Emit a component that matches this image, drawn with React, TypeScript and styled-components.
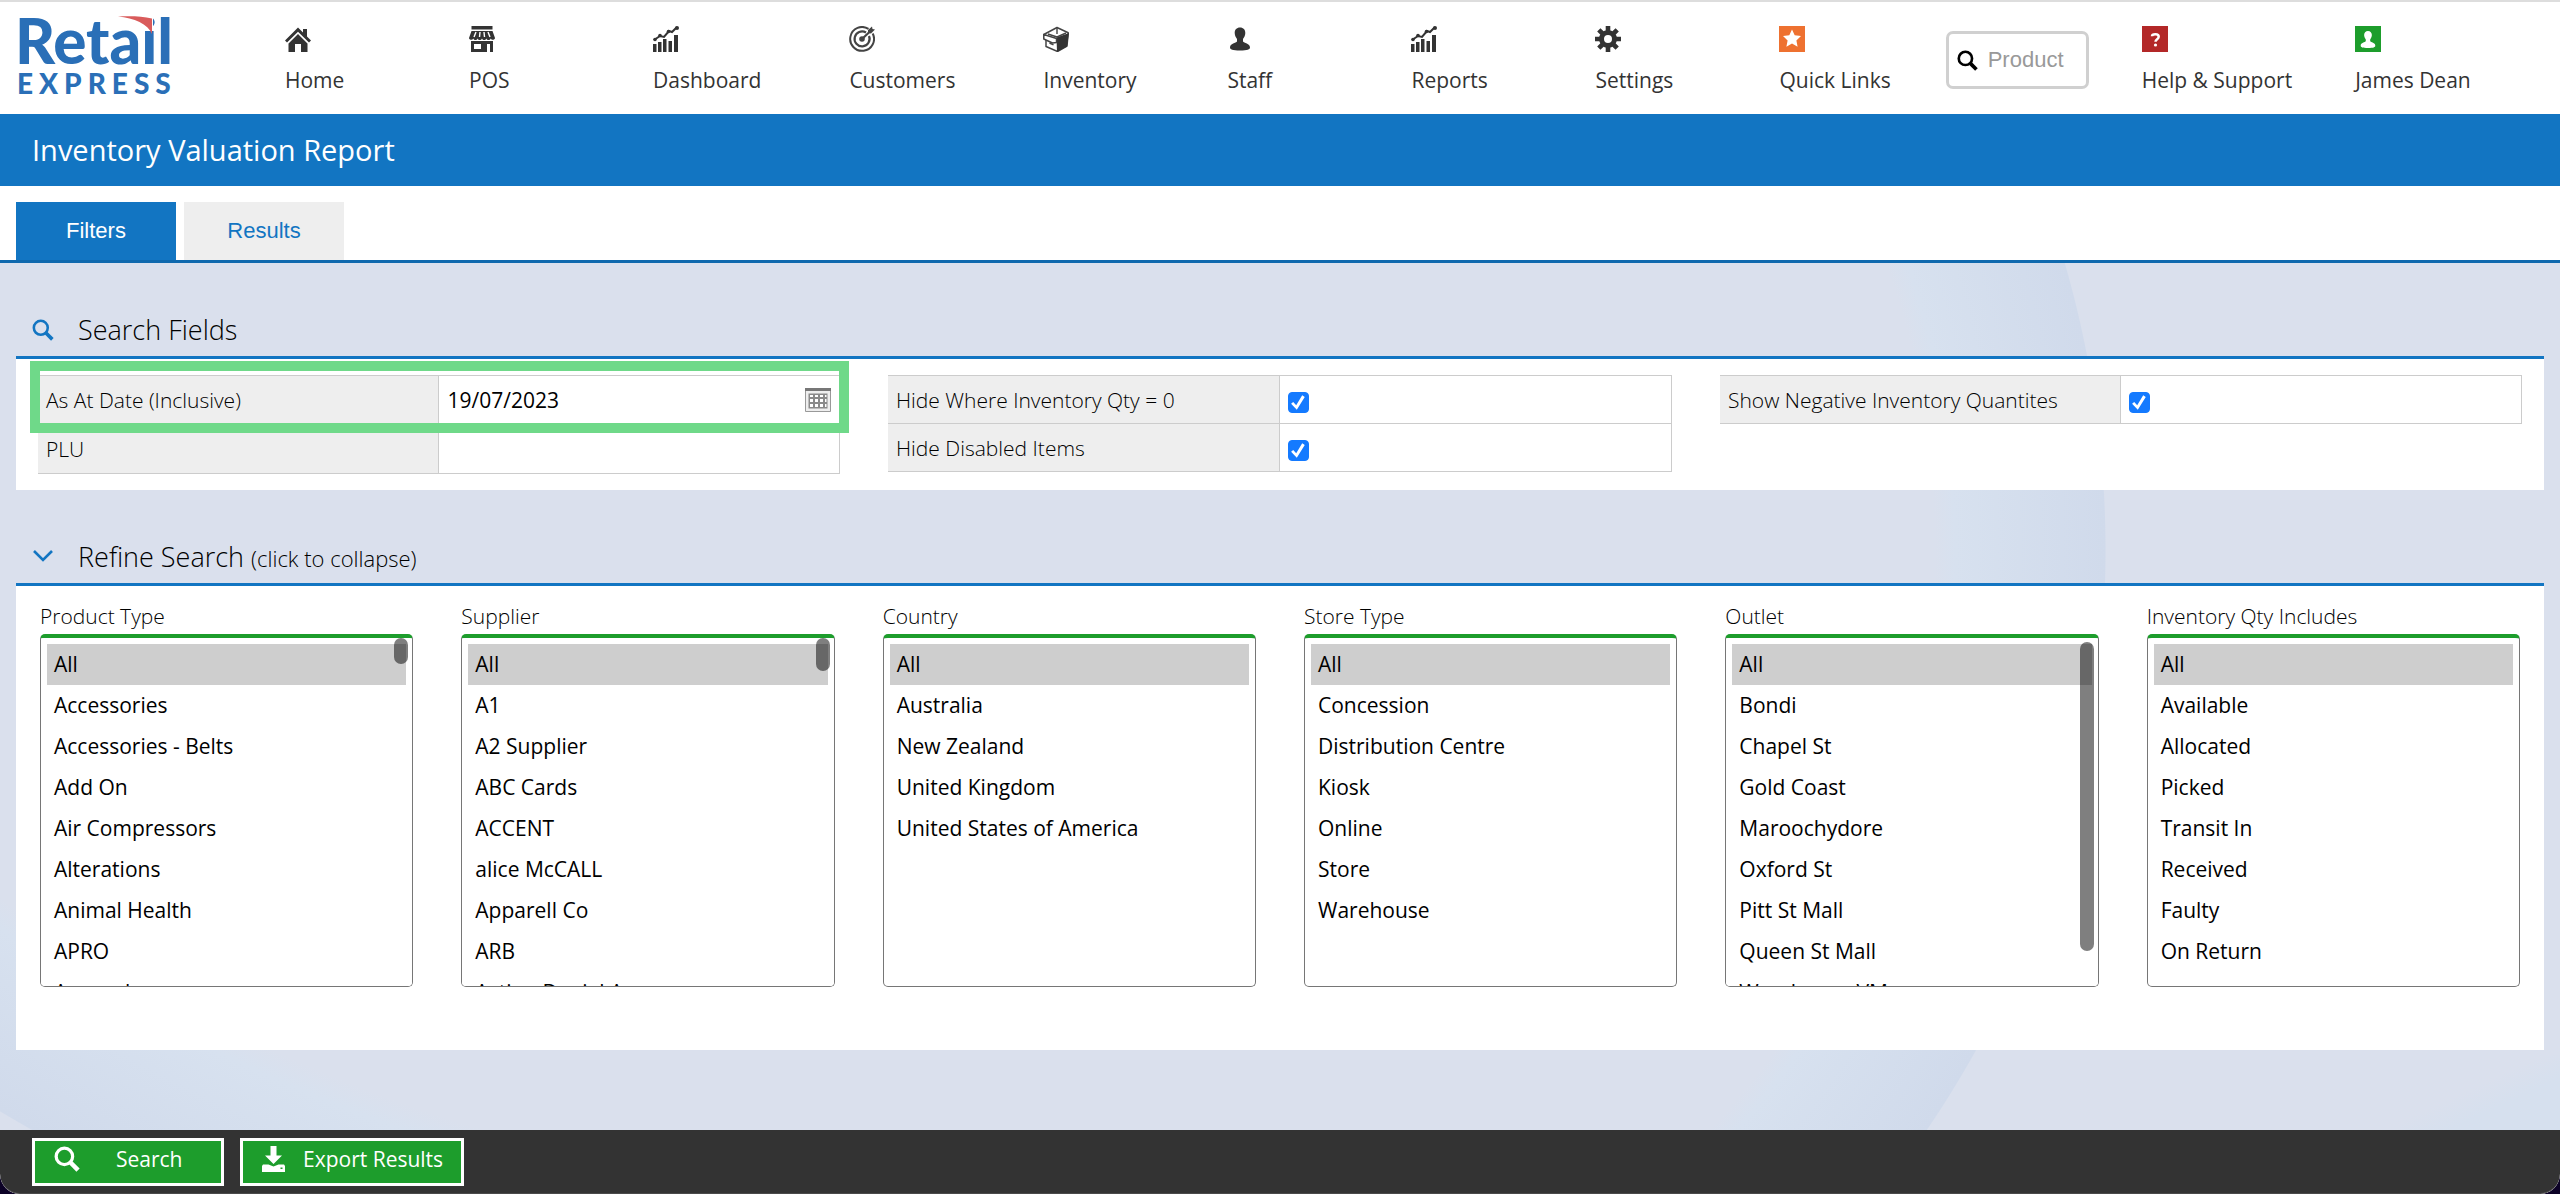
import React, { useState } from "react";
import styled, { createGlobalStyle } from "styled-components";

const BLUE = "#1275c2";
const GREEN = "#1d9d2c";
const LINE = "#cccccc";

const GlobalStyle = createGlobalStyle`
  *, *::before, *::after { box-sizing: border-box; }
  body {
    margin: 0;
    background: #0c0226;
    color: #000;
    font-family: "Open Sans", "Noto Sans", sans-serif;
    font-size: 21px;
    line-height: 28px;
  }
  button, input, select { font: inherit; color: inherit; }
`;

const Page = styled.div`
  min-height: 100vh;
  display: flex;
  flex-direction: column;
  overflow: hidden;
  background: #fff;
  border-radius: 0 0 20px 20px;
`;

const Header = styled.header`
  display: flex;
  align-items: flex-start;
  border-top: 2px solid #dddddd;
  padding: 0 14px;
`;

const LogoLink = styled.a`
  flex: none;
  display: block;
  width: 164px;
  margin-right: 107px;
`;

const LogoSvg = styled.svg`
  display: block;
`;

const Nav = styled.nav`
  flex: none;
  display: flex;
  gap: 88px;
  padding: 24px 0 20px;
`;

const NavLink = styled.a`
  display: flex;
  flex-direction: column;
  align-items: flex-start;
  gap: 14px;
  min-width: 96px;
  color: #333;
  white-space: nowrap;
  text-decoration: none;
`;

const NavIcon = styled.svg`
  display: block;
  width: 26px;
  height: 26px;
`;

const HeaderTools = styled.div`
  display: flex;
  flex: none;
  align-items: flex-start;
  gap: 53px;
  margin-left: 55px;
`;

const QuickSearch = styled.label`
  display: flex;
  align-items: center;
  gap: 10px;
  width: 143px;
  height: 58px;
  margin-top: 29px;
  padding: 0 8px;
  border: 3px solid #d0d0d0;
  border-radius: 7px;
  background: #fff;
`;

const QuickInput = styled.input`
  min-width: 0;
  flex: 1;
  padding: 0;
  border: 0;
  outline: 0;
  background: none;
  font-family: Arial, "Liberation Sans", sans-serif;
  font-size: 22px;
  &::placeholder { color: #999; opacity: 1; }
`;

const ToolLinks = styled(Nav)`
  gap: 63px;
`;

const TitleBar = styled.div`
  padding: 16px 32px;
  background: ${BLUE};
`;

const Title = styled.h1`
  margin: 0;
  color: #fff;
  font-size: 29px;
  font-weight: 400;
  line-height: 40px;
`;

const Tabs = styled.div`
  display: flex;
  gap: 8px;
  padding: 16px 16px 0;
  border-bottom: 3px solid #0f69ae;
`;

const Tab = styled.button<{ $active: boolean }>`
  width: 160px;
  height: 58px;
  padding: 0;
  border: 0;
  cursor: pointer;
  background: ${(p) => (p.$active ? BLUE : "#eeeeee")};
  color: ${(p) => (p.$active ? "#fff" : BLUE)};
  font-family: Arial, "Liberation Sans", sans-serif;
  font-size: 22px;
`;

const Main = styled.main`
  flex: 1;
  padding: 0 16px 80px;
  background:
    radial-gradient(circle at -425px 287px, transparent 860px, #d7e1ef 880px, #d0daeb 1030px, transparent 1031px) 1500px 0 / 700px 100% no-repeat,
    radial-gradient(circle at 1021px -872px, transparent 1820px, #d7e1ef 1845px, #d0daeb 2000px, transparent 2001px) 0 0 / 600px 100% no-repeat,
    linear-gradient(to bottom right, transparent 45%, #d6e0ee 65%) 100% 100% / 160px 75px no-repeat,
    #dae0ed;
`;

const Section = styled.section`
  padding-top: 48px;
`;

const SectionHead = styled.h2`
  margin: 0;
  padding: 0 16px 7px;
  font-size: 27px;
  font-weight: 300;
  line-height: 38px;
`;

const HeadContent = styled.span`
  display: flex;
  align-items: center;
  gap: 24px;
`;

const CollapseButton = styled.button`
  display: flex;
  align-items: center;
  gap: 24px;
  padding: 0;
  border: 0;
  background: none;
  cursor: pointer;
`;

const Hint = styled.small`
  font-size: 22px;
  line-height: 1;
`;

const Panel = styled.div`
  border-top: 3px solid ${BLUE};
  background: #fff;
`;

const FieldsPanel = styled(Panel)`
  display: grid;
  grid-template-columns: 802fr 784fr 802fr;
  align-items: start;
  gap: 48px;
  padding: 16px 22px;
`;

const FieldGroup = styled.div<{ $row: number }>`
  display: grid;
  grid-auto-rows: ${(p) => p.$row}px;
  border-top: 1px solid ${LINE};
`;

const FieldRow = styled.div`
  position: relative;
  display: grid;
  grid-template-columns: 1fr 1fr;
  border: solid ${LINE};
  border-width: 0 1px 1px 0;
`;

const FieldLabel = styled.label`
  display: flex;
  align-items: center;
  padding-left: 8px;
  background: #eeeeee;
  border-right: 1px solid ${LINE};
  font-weight: 300;
`;

const FieldValue = styled.div`
  display: flex;
  align-items: center;
  padding: 0 8px;
`;

const TextInput = styled.input`
  min-width: 0;
  flex: 1;
  padding: 0 1px;
  border: 0;
  outline: 0;
  background: none;
`;

const IconButton = styled.button`
  display: flex;
  padding: 0;
  border: 0;
  background: none;
  cursor: pointer;
`;

const Highlight = styled.div`
  position: absolute;
  z-index: 1;
  inset: -15px -10px -9px -8px;
  border: 10px solid #6fd989;
  pointer-events: none;
`;

const Checkbox = styled.input`
  appearance: none;
  display: grid;
  place-items: center;
  width: 21px;
  height: 21px;
  margin: 6px 0 0;
  border: 1px solid #767676;
  border-radius: 4px;
  background: #fff;
  &:checked { border-color: #147aff; background: #147aff; }
  &:checked::before {
    content: "";
    width: 15px;
    height: 15px;
    background: #fff;
    clip-path: polygon(4% 58%, 18% 46%, 38% 68%, 78% 2%, 95% 14%, 42% 98%);
  }
`;

const ListsPanel = styled(Panel)`
  display: grid;
  grid-template-columns: repeat(6, 1fr);
  gap: 48px;
  padding: 16px 24px 63px;
`;

const ListField = styled.div`
  display: flex;
  flex-direction: column;
  gap: 4px;
`;

const ListLabel = styled.label`
  font-weight: 300;
`;

const ListFrame = styled.div`
  position: relative;
`;

const ListBox = styled.select`
  display: block;
  width: 100%;
  height: 353px;
  padding: 6px 6px 0;
  overflow-y: auto;
  scrollbar-width: none;
  border: 1px solid #767676;
  border-top: 4px solid ${GREEN};
  border-radius: 5px;
  outline: 0;
  background: #fff;
  option {
    min-height: 41px;
    padding: 6px 7px 7px;
    line-height: 28px;
  }
  option:checked {
    background: #cecece linear-gradient(#cecece, #cecece);
    color: #000;
  }
`;

const ScrollThumb = styled.div<{ $top: number; $size: number }>`
  position: absolute;
  top: ${(p) => p.$top}px;
  right: 5px;
  width: 14px;
  height: ${(p) => p.$size}px;
  border-radius: 7px;
  background: rgba(0, 0, 0, 0.5);
  pointer-events: none;
`;

const Footer = styled.footer`
  display: flex;
  gap: 16px;
  padding: 8px 32px 7px;
  background: #333;
  border-bottom: 1px solid #4a4a4a;
  border-radius: 0 0 20px 20px;
`;

const ActionButton = styled.button<{ $width: number; $gap: number }>`
  display: flex;
  align-items: center;
  gap: ${(p) => p.$gap}px;
  width: ${(p) => p.$width}px;
  height: 48px;
  padding: 0 0 6px 19px;
  border: 3px solid #fff;
  background: ${GREEN};
  color: #fff;
  cursor: pointer;
`;

const Magnifier = ({ size, width }: { size: number; width: number }) => (
  <svg width={size} height={size} viewBox="0 0 24 24" fill="none" stroke="currentColor" strokeWidth={width}>
    <circle cx="9.6" cy="9.6" r="7.6" />
    <path d="M15 15l7.2 7.2" strokeWidth={width + 1.2} />
  </svg>
);

const BlueMark = styled.span`
  display: inline-flex;
  width: 22px;
  color: ${BLUE};
`;

const Logo = () => (
  <LogoSvg width="164" height="104" viewBox="0 0 164 104" role="img" aria-label="Retail Express">
    <text fill="#2a6fb7" fontFamily="Lato, sans-serif" fontWeight="900">
      <tspan x="1" y="62" fontSize="62">Retail</tspan>
      <tspan x="3" y="92" fontSize="28" letterSpacing="6">EXPRESS</tspan>
    </text>
    <rect x="121" y="12" width="18" height="17" fill="#fff" />
    <path d="M104 14.500C115 14 128 14 138 16.500V32C134 22 120 16 104 14.500Z" fill="#d95b5b" />
  </LogoSvg>
);

const ChartGlyph = () => (
  <g fill="#333">
    <path d="M0 18h3.500v8H0zM5 16h3.500v10H5zM10 13h3.500v13H10zM15.500 15H19v11h-3.500zM21 9h4v17h-4z" />
    <path d="M1 14l6-4 4 1 5-6 3 1 5-5" fill="none" stroke="#333" strokeWidth="2" />
    <circle cx="2" cy="13.500" r="1.800" /><circle cx="7" cy="9.500" r="1.800" /><circle cx="15.500" cy="5.500" r="1.800" /><circle cx="24" cy="2" r="2" />
  </g>
);

const PersonGlyph = () => (
  <path d="M13 1.500c3.400 0 5.300 2.300 5.300 5.500 0 2.600-1.300 4.600-2.300 6v2.500c.9 1.400 7 1.900 7 6 0 2-2.500 3-10 3s-10-1-10-3c0-4.100 6.100-4.600 7-6V13C9 11.600 7.700 9.600 7.700 7c0-3.200 1.900-5.500 5.300-5.500z" />
);

const glyphs: Record<string, React.ReactNode> = {
  home: (
    <g fill="#333">
      <path d="M13 1.500l5 5V3h4v7.500l4 4-2 2L13 5.700 2 16.500l-2-2z" />
      <path d="M3.500 17.500L13 8l9.500 9.500V26H16v-8h-6v8H3.500z" />
    </g>
  ),
  pos: (
    <g fill="#333">
      <path d="M2.500 0h21v3.500h-21z" />
      <path d="M2.500 5h21L26 12c0 2-3.500 2.500-4.300.5-.8 2-3.500 2-4.400 0-.8 2-3.500 2-4.300 0-.9 2-3.600 2-4.400 0-.9 2-3.500 2-4.300 0C3.500 14.500 0 14 0 12z" />
      <path d="M7 6L5 11M11 6l-.500 5M15 6l.500 5M19 6l2 5" stroke="#fff" strokeWidth="1.400" />
      <path d="M2 15h22v11h-3v-8h-3v8H2zM5 18v5h7v-5z" fillRule="evenodd" />
    </g>
  ),
  chart: <ChartGlyph />,
  target: (
    <g fill="none" stroke="#444">
      <path d="M19.500 2.900A11.900 11.900 0 1 0 23.700 7.500" strokeWidth="2" />
      <path d="M17 6.500A7.500 7.500 0 1 0 20 10" strokeWidth="2.200" />
      <circle cx="13" cy="13" r="2.800" fill="#444" stroke="none" />
      <path d="M13 13L21 5.500" strokeWidth="2.200" />
      <path d="M19 4l4-3.500 .500 2.500L26 3.500 22 7.500l-3-.500z" fill="#444" stroke="none" />
    </g>
  ),
  box: (
    <g strokeLinejoin="round">
      <path d="M.800 8.500L14 1.500l11.200 5.300L24 20l-9.500 5.500L3 20.500V14L.800 12z" fill="#fff" stroke="#444" strokeWidth="1.500" />
      <path d="M13.500 11.500L26 7l-2 13.500L14 26z" fill="#333" />
      <path d="M.800 8.500l12.700 4v4l-4 .5-8.700-4z" fill="#fff" stroke="#444" strokeWidth="1.500" />
      <path d="M5 8l9 3 9-4M14 2v6M6.500 17l4 1.800" fill="none" stroke="#444" strokeWidth="1.400" />
    </g>
  ),
  staff: <g fill="#333"><PersonGlyph /></g>,
  gear: (
    <g fill="none" stroke="#333">
      <circle cx="13" cy="13" r="6.500" strokeWidth="5" />
      <path d="M13 0v5M13 21v5M0 13h5M21 13h5M3.800 3.800l3.700 3.700M18.500 18.500l3.700 3.700M3.800 22.200l3.700-3.700M18.500 7.500l3.700-3.700" strokeWidth="4.600" />
    </g>
  ),
  star: (
    <g>
      <path d="M0 0h26v26H0z" fill="#ee7130" />
      <path d="M13 3.500l2.700 5.800 6.300.8-4.600 4.300 1.200 6.300L13 17.600l-5.600 3.100 1.200-6.300L4 10.100l6.300-.8z" fill="#fff" />
    </g>
  ),
  help: (
    <g>
      <path d="M0 0h26v26H0z" fill="#b32828" />
      <path d="M10 10.300c0-1.500 1.500-2 3.400-2 2.100 0 3.300.9 3.300 2.400 0 2.500-3.200 2.400-3.200 5" fill="none" stroke="#fff" strokeWidth="2.500" />
      <circle cx="13.500" cy="19" r="1.600" fill="#fff" />
    </g>
  ),
  user: (
    <g>
      <path d="M0 0h26v26H0z" fill={GREEN} />
      <g fill="#fff" transform="translate(3.500 4) scale(.73)"><PersonGlyph /></g>
    </g>
  ),
};

type Item = [glyph: string, label: string];

const NavItem = ({ item: [glyph, label] }: { item: Item }) => (
  <NavLink href="#">
    <NavIcon viewBox="0 0 26 26" aria-hidden="true">{glyphs[glyph]}</NavIcon>
    {label}
  </NavLink>
);

const mainNav: Item[] = [
  ["home", "Home"],
  ["pos", "POS"],
  ["chart", "Dashboard"],
  ["target", "Customers"],
  ["box", "Inventory"],
  ["staff", "Staff"],
  ["chart", "Reports"],
  ["gear", "Settings"],
  ["star", "Quick Links"],
];

const toolNav: Item[] = [
  ["help", "Help & Support"],
  ["user", "James Dean"],
];

interface ListSpec {
  label: string;
  options: string[];
  thumb?: { top: number; size: number };
}

const lists: ListSpec[] = [
  {
    label: "Product Type",
    thumb: { top: 4, size: 26 },
    options: ["All", "Accessories", "Accessories - Belts", "Add On", "Air Compressors", "Alterations", "Animal Health", "APRO", "Apparel"],
  },
  {
    label: "Supplier",
    thumb: { top: 4, size: 33 },
    options: ["All", "A1", "A2 Supplier", "ABC Cards", "ACCENT", "alice McCALL", "Apparell Co", "ARB", "Action Daniel A"],
  },
  {
    label: "Country",
    options: ["All", "Australia", "New Zealand", "United Kingdom", "United States of America"],
  },
  {
    label: "Store Type",
    options: ["All", "Concession", "Distribution Centre", "Kiosk", "Online", "Store", "Warehouse"],
  },
  {
    label: "Outlet",
    thumb: { top: 8, size: 309 },
    options: ["All", "Bondi", "Chapel St", "Gold Coast", "Maroochydore", "Oxford St", "Pitt St Mall", "Queen St Mall", "Warehouse VM"],
  },
  {
    label: "Inventory Qty Includes",
    options: ["All", "Available", "Allocated", "Picked", "Transit In", "Received", "Faulty", "On Return"],
  },
];

const CheckField = ({ id, label }: { id: string; label: string }) => (
  <FieldRow>
    <FieldLabel htmlFor={id}>{label}</FieldLabel>
    <FieldValue>
      <Checkbox id={id} type="checkbox" defaultChecked />
    </FieldValue>
  </FieldRow>
);

const FilterList = ({ label, options, thumb }: ListSpec) => {
  const id = label.toLowerCase().replace(/ /g, "-");
  return (
    <ListField>
      <ListLabel htmlFor={id}>{label}</ListLabel>
      <ListFrame>
        <ListBox id={id} multiple size={8} defaultValue={["All"]}>
          {options.map((o) => (
            <option key={o} value={o}>{o}</option>
          ))}
        </ListBox>
        {thumb && <ScrollThumb $top={thumb.top} $size={thumb.size} />}
      </ListFrame>
    </ListField>
  );
};

export default function App() {
  const [tab, setTab] = useState("Filters");
  const [open, setOpen] = useState(true);

  return (
    <>
      <GlobalStyle />
      <Page>
        <Header>
          <LogoLink href="#"><Logo /></LogoLink>
          <Nav>{mainNav.map((i) => <NavItem key={i[1]} item={i} />)}</Nav>
          <HeaderTools>
            <QuickSearch>
              <Magnifier size={21} width={3} />
              <QuickInput placeholder="Product" aria-label="Product" />
            </QuickSearch>
            <ToolLinks as="div">{toolNav.map((i) => <NavItem key={i[1]} item={i} />)}</ToolLinks>
          </HeaderTools>
        </Header>

        <TitleBar><Title>Inventory Valuation Report</Title></TitleBar>

        <Tabs role="tablist">
          {["Filters", "Results"].map((t) => (
            <Tab key={t} role="tab" aria-selected={tab === t} $active={tab === t} onClick={() => setTab(t)}>{t}</Tab>
          ))}
        </Tabs>

        <Main>
          <Section>
            <SectionHead>
              <HeadContent>
                <BlueMark><Magnifier size={22} width={2.8} /></BlueMark>
                Search Fields
              </HeadContent>
            </SectionHead>
            <FieldsPanel>
              <FieldGroup $row={49}>
                <FieldRow>
                  <FieldLabel htmlFor="date">As At Date (Inclusive)</FieldLabel>
                  <FieldValue>
                    <TextInput id="date" defaultValue="19/07/2023" />
                    <IconButton aria-label="Pick a date">
                      <svg width="26" height="24" viewBox="0 0 26 24">
                        <path d="M.5.500h25v23H.5z" fill="#eee" stroke="#999" />
                        <path d="M0 0h26v3H0z" fill="#777" />
                        <path d="M3.500 5.500h19v15h-19z" fill="#8a8a8a" />
                        <path d="M5 7h3v2H5zM10 7h3v2h-3zM15 7h3v2h-3zM5 11h3v3H5zM10 11h3v3h-3zM15 11h3v3h-3zM5 16h3v3H5zM10 16h3v3h-3zM15 16h3v3h-3zM20 7h1.500v2H20zM20 11h1.500v3H20zM20 16h1.500v3H20z" fill="#fff" />
                      </svg>
                    </IconButton>
                  </FieldValue>
                  <Highlight />
                </FieldRow>
                <FieldRow>
                  <FieldLabel htmlFor="plu">PLU</FieldLabel>
                  <FieldValue><TextInput id="plu" /></FieldValue>
                </FieldRow>
              </FieldGroup>
              <FieldGroup $row={48}>
                <CheckField id="hide-zero" label="Hide Where Inventory Qty = 0" />
                <CheckField id="hide-disabled" label="Hide Disabled Items" />
              </FieldGroup>
              <FieldGroup $row={48}>
                <CheckField id="show-negative" label="Show Negative Inventory Quantites" />
              </FieldGroup>
            </FieldsPanel>
          </Section>

          <Section>
            <SectionHead>
              <CollapseButton aria-expanded={open} onClick={() => setOpen(!open)}>
                <BlueMark>
                  <svg width="22" height="22" viewBox="0 0 22 22" fill="none" stroke="currentColor" strokeWidth="2.600">
                    <path d="M2 5l9 9 9-9" />
                  </svg>
                </BlueMark>
                <span>Refine Search <Hint>(click to collapse)</Hint></span>
              </CollapseButton>
            </SectionHead>
            {open && <ListsPanel>{lists.map((l) => <FilterList key={l.label} {...l} />)}</ListsPanel>}
          </Section>
        </Main>

        <Footer>
          <ActionButton $width={192} $gap={36}><Magnifier size={26} width={3} />Search</ActionButton>
          <ActionButton $width={224} $gap={18}>
            <svg width="23" height="26" viewBox="0 0 23 26" fill="#fff">
              <path d="M8.500 0h6v9.500H20L11.500 18 3 9.500h5.500z" />
              <path d="M1 18.500h5.500l5 2 5-2H22l1 1.500v6H0v-6z" />
              <path d="M18.500 21.500h2v1.500h-2z" fill={GREEN} />
            </svg>
            Export Results
          </ActionButton>
        </Footer>
      </Page>
    </>
  );
}
